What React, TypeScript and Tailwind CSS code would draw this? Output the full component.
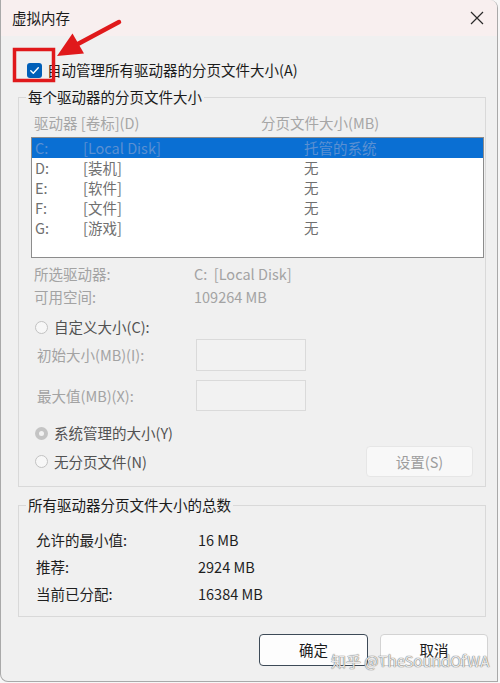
import React from "react";

const FONT = { fontFamily: '"Noto Sans CJK SC", "Noto Sans", sans-serif' };

function Radio({ checked }: { checked?: boolean }) {
  return checked ? (
    <span className="w-[13px] h-[13px] rounded-full bg-[#c4c4c4] flex items-center justify-center shrink-0">
      <span className="w-[5px] h-[5px] rounded-full bg-[#f2f2f2]" />
    </span>
  ) : (
    <span className="w-[13px] h-[13px] rounded-full border border-[#c2c2c2] bg-[#f7f7f7] shrink-0" />
  );
}

const rows = [
  { d: "C:", l: "[Local Disk]", s: "托管的系统", sel: true },
  { d: "D:", l: "[装机]", s: "无" },
  { d: "E:", l: "[软件]", s: "无" },
  { d: "F:", l: "[文件]", s: "无" },
  { d: "G:", l: "[游戏]", s: "无" },
];

export default function App() {
  return (
    <div className="w-[500px] h-[683px] bg-[#f7f7f7] relative overflow-hidden text-[14.5px] leading-[20px]" style={FONT}>
      <div className="w-[498px] h-[682px] bg-[#f0f0f0] border-l border-r border-b border-[#a9a9a9] rounded-tr-[8px] rounded-bl-[8px] flex flex-col overflow-hidden">
        {/* title bar */}
        <div className="h-[36px] bg-[#f8efef] flex items-center justify-between pl-[11px] pr-[12px] shrink-0">
          <span className="text-[#1b1b1b] text-[14.5px]">虚拟内存</span>
          <svg width="14" height="14" viewBox="0 0 14 14" className="mr-[1px]">
            <path d="M1 1 L13 13 M13 1 L1 13" stroke="#2a2a2a" strokeWidth="1.2" />
          </svg>
        </div>

        {/* auto-manage checkbox */}
        <div className="mt-[24px] h-[20px] flex items-center pl-[26px] shrink-0">
          <span className="w-[15px] h-[15px] rounded-[3px] bg-[#005fb8] flex items-center justify-center shrink-0">
            <svg width="11" height="11" viewBox="0 0 11 11">
              <path d="M1.8 5.8 L4.3 8.2 L9.3 2.8" stroke="#fff" strokeWidth="1.4" fill="none" strokeLinecap="round" strokeLinejoin="round" />
            </svg>
          </span>
          <span className="ml-[5px] text-[#1b1b1b]">自动管理所有驱动器的分页文件大小(A)</span>
        </div>

        {/* group 1 */}
        <fieldset className="mt-[7px] ml-[17px] w-[468px] border border-[#d9d9d9] shrink-0">
          <legend className="ml-[7px] px-[2px] h-[20px] text-[#1b1b1b]">每个驱动器的分页文件大小</legend>
          <div className="mt-[6px] h-[20px] flex items-center text-[#a6a6a6]">
            <span className="pl-[15px] w-[242px]">驱动器 [卷标](D)</span>
            <span>分页文件大小(MB)</span>
          </div>
          <div className="mt-[4px] ml-[12px] w-[453px] h-[121px] bg-white border border-[#8c8c8c] flex flex-col">
            {rows.map((r) => (
              <div
                key={r.d}
                className={
                  r.sel
                    ? "h-[20px] flex items-center bg-[#0a6fd3] text-[#5a90d2]"
                    : "h-[20px] flex items-center text-[#707070]"
                }
              >
                <span className="pl-[3px] w-[51px]">{r.d}</span>
                <span className="w-[221px]">{r.l}</span>
                <span>{r.s}</span>
              </div>
            ))}
          </div>
          <div className="mt-[4px] h-[23px] flex items-center text-[#a3a3a3]">
            <span className="pl-[15px] w-[175px]">所选驱动器:</span>
            <span>C:&nbsp; [Local Disk]</span>
          </div>
          <div className="h-[23px] flex items-center text-[#a3a3a3]">
            <span className="pl-[15px] w-[175px]">可用空间:</span>
            <span>109264 MB</span>
          </div>
          <div className="mt-[8px] h-[22px] flex items-center pl-[16px] text-[#525252]">
            <Radio />
            <span className="ml-[6px]">自定义大小(C):</span>
          </div>
          <div className="mt-[1px] h-[32px] flex items-center text-[#a3a3a3]">
            <span className="pl-[18px] w-[177px]">初始大小(MB)(I):</span>
            <span className="w-[110px] h-[32px] border border-[#dadada] bg-[#f2f2f2]" />
          </div>
          <div className="mt-[9px] h-[31px] flex items-center text-[#a3a3a3]">
            <span className="pl-[18px] w-[177px]">最大值(MB)(X):</span>
            <span className="w-[110px] h-[31px] border border-[#dadada] bg-[#f2f2f2]" />
          </div>
          <div className="mt-[11px] h-[22px] flex items-center pl-[16px] text-[#525252]">
            <Radio checked />
            <span className="ml-[6px]">系统管理的大小(Y)</span>
          </div>
          <div className="mt-[2px] mb-[9px] h-[31px] flex items-center pl-[16px] text-[#525252]">
            <Radio />
            <span className="ml-[6px]">无分页文件(N)</span>
            <span className="ml-auto mr-[12px] w-[107px] h-[31px] rounded-[4px] bg-[#f8f8f8] border border-[#e6e6e6] flex items-center justify-center text-[#9d9d9d]">
              设置(S)
            </span>
          </div>
        </fieldset>

        {/* group 2 */}
        <fieldset className="mt-[8px] ml-[17px] w-[468px] border border-[#d9d9d9] shrink-0">
          <legend className="ml-[7px] px-[2px] h-[20px] text-[#1b1b1b]">所有驱动器分页文件大小的总数</legend>
          <div className="mt-[11px] mb-[9px] flex flex-col text-[#1f1f1f]">
            {[
              ["允许的最小值:", "16 MB"],
              ["推荐:", "2924 MB"],
              ["当前已分配:", "16384 MB"],
            ].map(([a, b]) => (
              <div key={a} className="h-[27px] flex items-center">
                <span className="pl-[17px] w-[179px]">{a}</span>
                <span>{b}</span>
              </div>
            ))}
          </div>
        </fieldset>

        {/* buttons */}
        <div className="mt-[17px] flex justify-end gap-[12px] pr-[9px] shrink-0">
          <span className="w-[109px] h-[32px] rounded-[4px] bg-[#fdfdfd] border-[1.5px] border-[#3d4a57] flex items-center justify-center text-[#1b1b1b]">
            确定
          </span>
          <span className="w-[108px] h-[32px] rounded-[4px] bg-[#fdfdfd] border border-[#d3d3d3] flex items-center justify-center text-[#1b1b1b]">
            取消
          </span>
        </div>
      </div>

      {/* watermark */}
      <div className="absolute left-[331px] top-[651px] text-[15px] leading-[20px] text-[rgba(255,255,255,0.85)] [text-shadow:0_0_1px_#6b6b6b,0_0_1px_#6b6b6b] whitespace-nowrap">
        知乎 @TheSoundOfWA
      </div>

      {/* red annotation */}
      <svg className="absolute left-0 top-0 pointer-events-none" width="500" height="120" viewBox="0 0 500 120">
        <rect x="14.5" y="49.5" width="39" height="31" fill="none" stroke="#e0191b" strokeWidth="3.5" />
        <line x1="119" y1="22" x2="76" y2="45" stroke="#e0191b" strokeWidth="4.5" strokeLinecap="round" />
        <polygon points="57,56 72.5,33.5 84,53.5" fill="#e0191b" />
      </svg>
    </div>
  );
}
